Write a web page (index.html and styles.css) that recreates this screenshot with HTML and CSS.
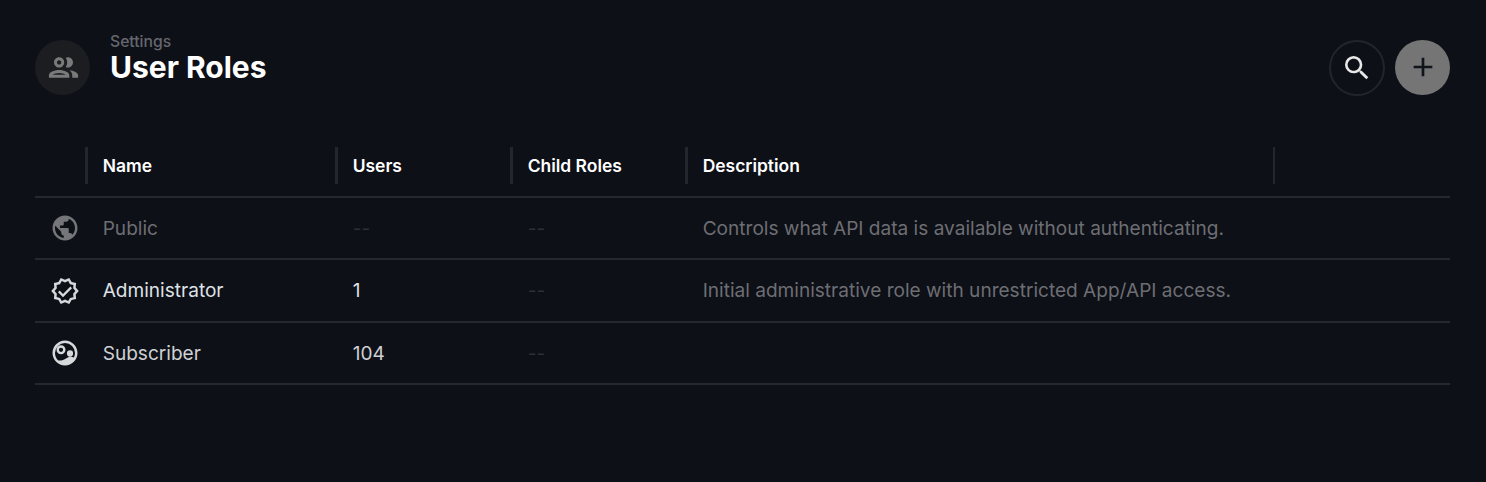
FILE: index.html
```html
<!DOCTYPE html>
<html lang="en">
<head>
<meta charset="utf-8">
<title>User Roles</title>
<link rel="stylesheet" href="styles.css">
</head>
<body>
<main class="page">
  <header class="head">
    <div class="avatar">
      <svg class="avatar-icon" viewBox="0 0 24 24"><path d="M9 13.75c-2.34 0-7 1.17-7 3.5V19h14v-1.75c0-2.33-4.66-3.5-7-3.5zM4.34 17c.84-.58 2.87-1.25 4.66-1.25s3.82.67 4.66 1.25H4.34zM9 12c1.93 0 3.5-1.57 3.5-3.5S10.93 5 9 5 5.5 6.57 5.5 8.5 7.07 12 9 12zm0-5c.83 0 1.5.67 1.5 1.5S9.83 10 9 10s-1.5-.67-1.5-1.5S8.17 7 9 7zm7.04 6.81c1.16.84 1.96 1.96 1.96 3.44V19h4v-1.75c0-2.02-3.5-3.17-5.96-3.44zM15 12c1.93 0 3.5-1.57 3.5-3.5S16.93 5 15 5c-.54 0-1.04.13-1.5.35.63.89 1 1.98 1 3.15s-.37 2.26-1 3.15c.46.22.96.35 1.5.35z"/></svg>
    </div>
    <div class="titles">
      <div class="crumb">Settings</div>
      <h1 class="title">User Roles</h1>
    </div>
    <div class="actions">
      <button class="btn btn-outline" aria-label="Search">
        <svg class="btn-icon" viewBox="0 0 24 24"><path d="M15.5 14h-.79l-.28-.27A6.47 6.47 0 0 0 16 9.5 6.5 6.5 0 1 0 9.5 16c1.61 0 3.09-.59 4.23-1.57l.27.28v.79l5 4.99L20.49 19l-4.99-5zm-6 0C7.01 14 5 11.99 5 9.5S7.01 5 9.5 5 14 7.01 14 9.5 11.99 14 9.5 14z"/></svg>
      </button>
      <button class="btn btn-filled" aria-label="Add">
        <svg class="btn-icon" viewBox="0 0 24 24"><path d="M19 13h-6v6h-2v-6H5v-2h6V5h2v6h6v2z"/></svg>
      </button>
    </div>
  </header>

  <section class="table">
    <div class="row row-head">
      <div class="cell"></div>
      <div class="cell th">Name</div>
      <div class="cell th">Users</div>
      <div class="cell th">Child Roles</div>
      <div class="cell th">Description</div>
      <div class="cell th th-last"></div>
    </div>
    <div class="row row-public">
      <div class="cell cell-icon">
        <svg class="role-icon" viewBox="0 0 24 24"><path fill-rule="evenodd" d="M12 2C6.48 2 2 6.48 2 12s4.48 10 10 10 10-4.48 10-10S17.52 2 12 2zm-1 17.93c-3.95-.49-7-3.85-7-7.93 0-.62.08-1.21.21-1.79L9 15v1c0 1.1.9 2 2 2v1.93zm6.9-2.54c-.26-.81-1-1.39-1.9-1.39h-1v-3c0-.55-.45-1-1-1H8v-2h2c.55 0 1-.45 1-1V7h2c1.1 0 2-.9 2-2v-.41c2.93 1.19 5 4.06 5 7.41 0 2.08-.8 3.97-2.1 5.39z"/></svg>
      </div>
      <div class="cell">Public</div>
      <div class="cell empty">--</div>
      <div class="cell empty">--</div>
      <div class="cell desc">Controls what API data is available without authenticating.</div>
      <div class="cell"></div>
    </div>
    <div class="row row-admin">
      <div class="cell cell-icon">
        <svg class="role-icon" viewBox="0 0 24 24"><path d="M23 12l-2.44-2.78.34-3.68-3.61-.82L15.4 1.54 12 3 8.6 1.54 6.71 4.72l-3.61.81.34 3.68L1 12l2.44 2.78-.34 3.69 3.61.82 1.89 3.18L12 21l3.4 1.46 1.89-3.18 3.61-.82-.34-3.68L23 12zm-4.51 2.11l.26 2.79-2.75.6-1.42 2.42L12 18.8l-2.58 1.11L8 17.5l-2.75-.61.25-2.79L3.66 12 5.5 9.88 5.25 7.1 8 6.5l1.42-2.42L12 5.19l2.58-1.11L16 6.5l2.75.61-.25 2.78L20.34 12l-1.85 2.11zM16.3 8.4L10.4 14.3l-2.7-2.7-1.3 1.3 4 4 7.2-7.2-1.3-1.3z"/></svg>
      </div>
      <div class="cell">Administrator</div>
      <div class="cell">1</div>
      <div class="cell empty">--</div>
      <div class="cell desc">Initial administrative role with unrestricted App/API access.</div>
      <div class="cell"></div>
    </div>
    <div class="row row-sub">
      <div class="cell cell-icon">
        <svg class="role-icon" viewBox="0 0 24 24"><path fill-rule="evenodd" d="M12 2C6.48 2 2 6.48 2 12s4.48 10 10 10 10-4.48 10-10S17.52 2 12 2zM4 12a8 8 0 0 1 16 0c0 1.3-.3 2.5-.85 3.6C17.8 15 16 14.8 14.6 15.4 12.5 16.3 11 17.8 9 18c-.9.1-1.8.2-2.7-.3C4.9 16.4 4 14.3 4 12zM8.8 5.8a3.6 3.6 0 1 0 0 7.2 3.6 3.6 0 0 0 0-7.2zm0 1.9a1.7 1.7 0 1 1 0 3.4 1.7 1.7 0 0 1 0-3.4zM16 9.8a2.5 2.5 0 1 0 0 5 2.5 2.5 0 0 0 0-5z"/></svg>
      </div>
      <div class="cell">Subscriber</div>
      <div class="cell">104</div>
      <div class="cell empty">--</div>
      <div class="cell desc"></div>
      <div class="cell"></div>
    </div>
  </section>
</main>
</body>
</html>
```
FILE: styles.css
```css
* { box-sizing: border-box; }
html, body { margin: 0; height: 100%; }
body {
  background: #0d1017;
  color: #fff;
  font-family: Inter, "Liberation Sans", sans-serif;
}
.page { padding: 40px 36px 0 35px; }
.head { display: flex; align-items: center; height: 55px; }
.avatar {
  width: 55px; height: 55px; border-radius: 50%;
  background: #1b1d21;
  display: flex; align-items: center; justify-content: center;
  padding-left: 1px;
}
.avatar-icon { width: 35px; height: 35px; fill: #7a7a7a; }
.titles { margin-left: 20px; margin-top: -19px; }
.crumb { font-size: 15.7px; line-height: 17px; font-weight: 500; color: #66676e; }
.title { margin: 0; font-size: 30px; line-height: 34px; font-weight: 700; color: #fff; }
.actions { margin-left: auto; display: flex; gap: 10px; }
.btn {
  width: 56px; height: 56px; border-radius: 50%; padding: 0;
  display: flex; align-items: center; justify-content: center;
  background: transparent; border: 2px solid #22252c;
}
.btn-filled { width: 55px; height: 55px; background: #757575; border: 0; }
.btn-icon { width: 32px; height: 32px; }
.btn-outline .btn-icon { fill: #e8e8e8; }
.btn-filled .btn-icon { fill: #11141b; }

.table { margin-top: 46px; }
.row {
  display: grid;
  grid-template-columns: 50px 250px 175px 175px 588px 177px;
  height: 62.4px;
  padding-top: 0.2px;
  border-bottom: 2px solid #26282f;
  align-items: center;
  font-size: 19.07px;
  color: #ced0d4;
}
.row-head { height: 57px; padding-top: 0; padding-bottom: 6px; color: #fff; }
.cell { padding-left: 17.7px; white-space: nowrap; }
.th {
  height: 37px; line-height: 37px;
  border-left: 3px solid #24262d;
  padding-left: 14.7px;
  font-size: 17.45px; font-weight: 600; color: #fff;
}
.th-last { border-left-width: 2px; }
.cell-icon { padding: 0 0 0 10px; display: flex; justify-content: center; }
.role-icon { width: 30px; height: 30px; fill: #d6d8db; }
.row-public { color: #6d6e73; }
.row-public .role-icon { fill: #75767a; }
.empty { color: #2c2f35; }
.desc { color: #6d6e73; }
.row-admin { color: #dfe1e5; }
```
